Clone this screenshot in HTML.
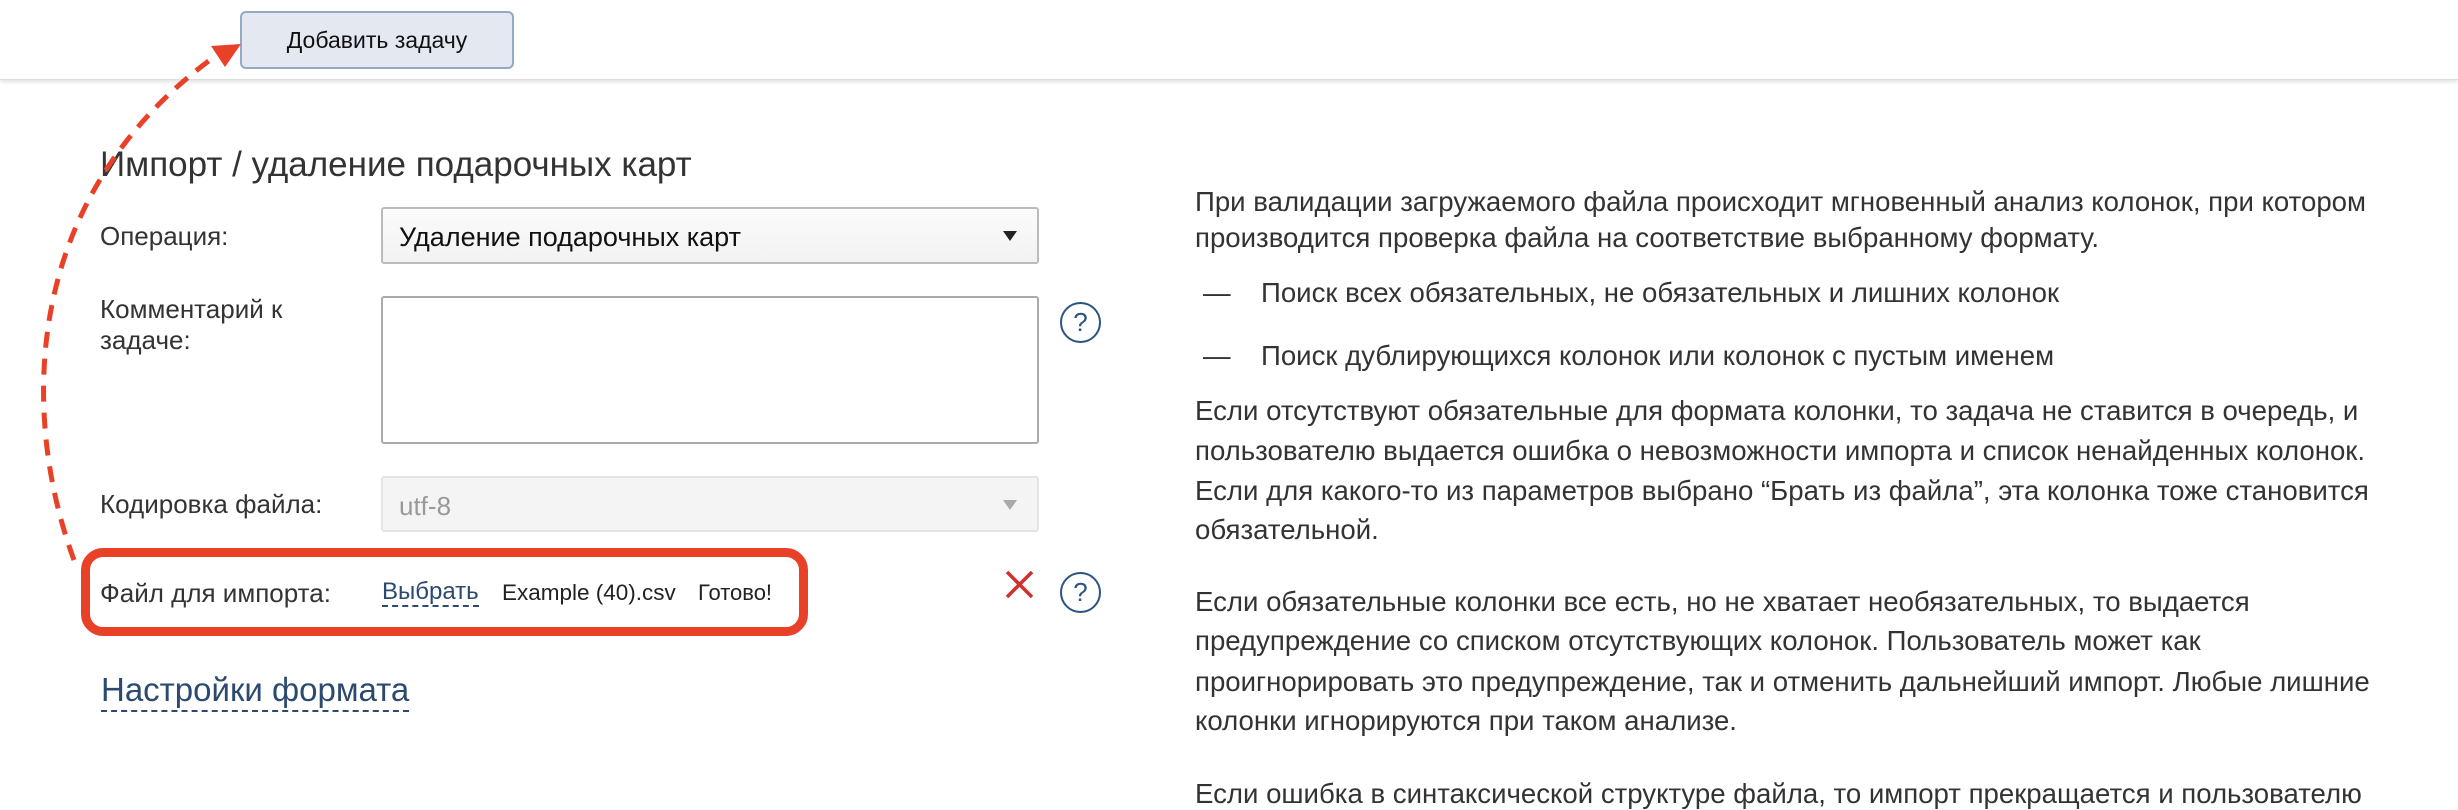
<!DOCTYPE html>
<html><head><meta charset="utf-8"><style>
*{margin:0;padding:0;box-sizing:border-box}
body{width:2458px;height:794px;background:#fff;font-family:"Liberation Sans",sans-serif;color:#333;position:relative;overflow:hidden}
.hdr{position:absolute;left:0;top:0;width:2458px;height:80px;background:#fff;border-bottom:1px solid #ddd;box-shadow:0 2px 4px rgba(0,0,0,.12)}
.btn{position:absolute;left:240px;top:11px;width:274px;height:58px;background:#e4e9f1;border:2px solid #93aac2;border-radius:6px;font-size:23px;color:#111;text-align:center;line-height:54px}
.a{position:absolute;white-space:nowrap}
.lbl{font-size:26px;color:#333}
.sel{position:absolute;left:381px;width:658px;border:2px solid #bbb;border-radius:3px;background:linear-gradient(#fbfbfb,#f2f2f2)}
.tri{position:absolute;right:20px;width:0;height:0;border-left:7px solid transparent;border-right:7px solid transparent;border-top:10px solid #222}
.q{position:absolute;width:41px;height:41px;border:2px solid #2c5480;border-radius:50%;color:#2c5480;font-size:26px;text-align:center;line-height:37px}
.rt{position:absolute;left:1195px;top:0;font-size:27.6px;color:#333;white-space:nowrap}
.rt div{position:absolute;left:0;white-space:nowrap}
.rt .b{position:absolute;left:66px}
</style></head><body>
<div class="hdr"></div>
<div class="btn">Добавить задачу</div>

<div class="a" style="left:100px;top:145px;font-size:35px;color:#333">Импорт / удаление подарочных карт</div>

<div class="a lbl" style="left:100px;top:221px">Операция:</div>
<div class="sel" style="top:207px;height:57px"><span class="a" style="left:16px;top:13px;font-size:27px;color:#111">Удаление подарочных карт</span><div class="tri" style="top:22px"></div></div>

<div class="a lbl" style="left:100px;top:294px;line-height:31px">Комментарий к<br>задаче:</div>
<div class="sel" style="top:296px;height:148px;background:#fff;border-color:#aaa"></div>
<div class="q" style="left:1060px;top:302px">?</div>

<div class="a lbl" style="left:100px;top:489px">Кодировка файла:</div>
<div class="sel" style="top:476px;height:56px;background:#f4f4f4;border-color:#e4e4e4"><span class="a" style="left:16px;top:13px;font-size:26px;color:#999">utf-8</span><div class="tri" style="top:22px;border-top-color:#aaa"></div></div>

<div class="a" style="left:81px;top:548px;width:727px;height:88px;border:9px solid #e84127;border-radius:22px"></div>
<div class="a" style="left:100px;top:578px;font-size:26px;color:#333">Файл для импорта:</div>
<div class="a" style="left:382px;top:578px;font-size:24px;color:#2c4a70;border-bottom:2px dashed #2c4a70;line-height:27px">Выбрать</div>
<div class="a" style="left:502px;top:580px;font-size:22.5px;color:#222">Example (40).csv</div>
<div class="a" style="left:698px;top:580px;font-size:22px;color:#222">Готово!</div>
<svg class="a" style="left:1000px;top:565px" width="40" height="40"><path d="M7 7L32 32M32 7L7 32" stroke="#d0312d" stroke-width="3.5"/></svg>
<div class="q" style="left:1060px;top:572px">?</div>

<div class="a" style="left:101px;top:670px;font-size:33px;color:#2c4a70;border-bottom:2px dashed #2c4a70;line-height:40px">Настройки формата</div>

<div class="rt">
<div style="top:186px">При валидации загружаемого файла происходит мгновенный анализ колонок, при котором</div>
<div style="top:222px">производится проверка файла на соответствие выбранному формату.</div>
<div style="top:277px;width:1200px;height:40px"><span style="position:absolute;left:8px">—</span><span class="b">Поиск всех обязательных, не обязательных и лишних колонок</span></div>
<div style="top:340px;width:1200px;height:40px"><span style="position:absolute;left:8px">—</span><span class="b">Поиск дублирующихся колонок или колонок с пустым именем</span></div>
<div style="top:395px">Если отсутствуют обязательные для формата колонки, то задача не ставится в очередь, и</div>
<div style="top:435px">пользователю выдается ошибка о невозможности импорта и список ненайденных колонок.</div>
<div style="top:475px">Если для какого-то из параметров выбрано “Брать из файла”, эта колонка тоже становится</div>
<div style="top:514px">обязательной.</div>
<div style="top:586px">Если обязательные колонки все есть, но не хватает необязательных, то выдается</div>
<div style="top:625px">предупреждение со списком отсутствующих колонок. Пользователь может как</div>
<div style="top:666px">проигнорировать это предупреждение, так и отменить дальнейший импорт. Любые лишние</div>
<div style="top:705px">колонки игнорируются при таком анализе.</div>
<div style="top:778px">Если ошибка в синтаксической структуре файла, то импорт прекращается и пользователю</div>
</div>

<svg class="a" style="left:0;top:0" width="300" height="600">
<path d="M74,560 C22,420 18,200 214,57" fill="none" stroke="#e84127" stroke-width="5" stroke-dasharray="16 11"/>
<polygon points="241,44 211,46 225,67" fill="#e84127"/>
</svg>
</body></html>
